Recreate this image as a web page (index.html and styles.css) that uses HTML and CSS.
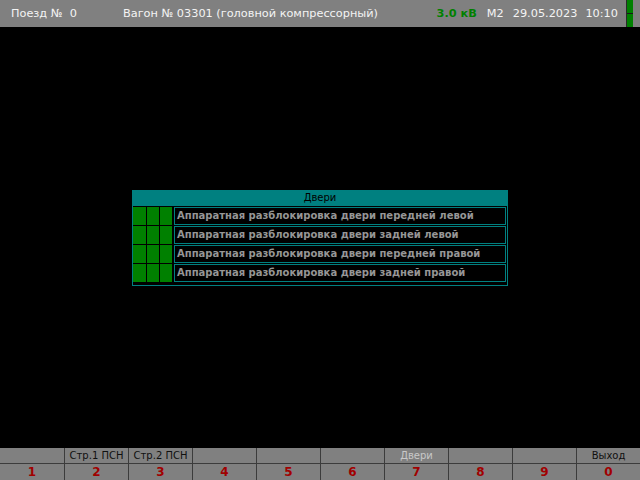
FILE: index.html
```html
<!DOCTYPE html>
<html lang="ru">
<head>
<meta charset="utf-8">
<title>Двери</title>
<link rel="stylesheet" href="styles.css">
</head>
<body>
<div class="screen">
  <header class="topbar">
    <span class="train">Поезд №&nbsp;&nbsp;0</span>
    <span class="wagon">Вагон № 03301 (головной компрессорный)</span>
    <span class="volt">3.0 кВ</span>
    <span class="mode">М2</span>
    <span class="date">29.05.2023</span>
    <span class="time">10:10</span>
    <span class="ind"><i></i><i></i></span>
  </header>
  <main class="main">
    <section class="dialog">
      <div class="dlg-title">Двери</div>
      <div class="rows">
        <div class="row"><i class="c"></i><i class="c"></i><i class="c"></i><div class="txt">Аппаратная разблокировка двери передней левой</div></div>
        <div class="row"><i class="c"></i><i class="c"></i><i class="c"></i><div class="txt">Аппаратная разблокировка двери задней левой</div></div>
        <div class="row"><i class="c"></i><i class="c"></i><i class="c"></i><div class="txt">Аппаратная разблокировка двери передней правой</div></div>
        <div class="row"><i class="c"></i><i class="c"></i><i class="c"></i><div class="txt">Аппаратная разблокировка двери задней правой</div></div>
      </div>
    </section>
  </main>
  <footer class="keys">
    <div class="key"><span class="lbl"></span><span class="num">1</span></div>
    <div class="key"><span class="lbl">Стр.1 ПСН</span><span class="num">2</span></div>
    <div class="key"><span class="lbl">Стр.2 ПСН</span><span class="num">3</span></div>
    <div class="key"><span class="lbl"></span><span class="num">4</span></div>
    <div class="key"><span class="lbl"></span><span class="num">5</span></div>
    <div class="key"><span class="lbl"></span><span class="num">6</span></div>
    <div class="key"><span class="lbl dim">Двери</span><span class="num">7</span></div>
    <div class="key"><span class="lbl"></span><span class="num">8</span></div>
    <div class="key"><span class="lbl"></span><span class="num">9</span></div>
    <div class="key"><span class="lbl">Выход</span><span class="num">0</span></div>
  </footer>
</div>
</body>
</html>
```
FILE: styles.css
```css
html, body {
  margin: 0;
  padding: 0;
  background: #000;
}
.screen {
  width: 640px;
  height: 480px;
  display: flex;
  flex-direction: column;
  font-family: "DejaVu Sans", "Liberation Sans", sans-serif;
  font-size: 11px;
}
.topbar {
  height: 27px;
  background: #808080;
  display: flex;
  align-items: center;
  color: #f4f4f4;
  font-size: 11.3px;
}
.train { margin-left: 11px; width: 112px; }
.wagon { flex: 1; }
.volt { color: #008000; font-weight: bold; margin-right: 10px; }
.mode { margin-right: 9px; }
.date { margin-right: 8px; }
.time { margin-right: 8px; }
.ind {
  align-self: stretch;
  width: 6px;
  margin-right: 7px;
  border-left: 1px solid #2a2a2a;
  display: flex;
  flex-direction: column;
  gap: 1px;
  background: #1a1a1a;
}
.ind i { flex: 1; background: #008000; }
.main {
  flex: 1;
  display: flex;
  align-items: center;
  justify-content: center;
}
.dialog {
  width: 374px;
  border: 1px solid #008080;
  border-top: 0;
  background: #000;
}
.dlg-title {
  height: 16px;
  line-height: 16px;
  background: #008080;
  color: #000;
  text-align: center;
  font-size: 10px;
}
.rows {
  display: flex;
  flex-direction: column;
  gap: 1px;
  padding: 1px 1px 3px 0;
}
.row {
  height: 18px;
  display: grid;
  grid-template-columns: 13px 12px 12px minmax(0, 1fr);
  gap: 1px;
}
.c { background: #008000; }
.txt {
  margin-left: 1px;
  border: 1px solid #008080;
  color: #969696;
  font-weight: bold;
  font-size: 10px;
  line-height: 16px;
  padding-left: 2px;
  white-space: nowrap;
  overflow: hidden;
}
.keys {
  height: 32px;
  background: #808080;
  display: grid;
  grid-template-columns: repeat(10, 1fr);
}
.key {
  display: flex;
  flex-direction: column;
  border-left: 1px solid #3c3c3c;
}
.key:first-child { border-left: 0; }
.lbl {
  height: 15px;
  line-height: 15px;
  text-align: center;
  color: #101010;
  border-bottom: 1px solid #3c3c3c;
  font-size: 10px;
}
.lbl.dim { color: #c8c8c8; }
.num {
  flex: 1;
  line-height: 16px;
  text-align: center;
  color: #a00000;
  font-weight: bold;
  font-size: 12px;
}
```
